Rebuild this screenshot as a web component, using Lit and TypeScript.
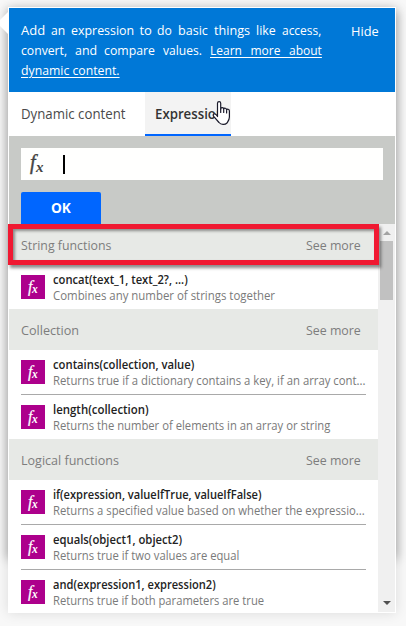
import { LitElement, html, css, svg } from "lit";
import { customElement, property } from "lit/decorators.js";

/** Text run condensed or widened so that it occupies a given width. */
@customElement("fit-text")
class FitText extends LitElement {
  @property({ type: String }) text = "";
  @property({ type: Number }) width = 0;

  static styles = css`
    :host { display: block; white-space: pre; }
    .run { display: inline-block; transform-origin: 0 50%; text-decoration: inherit; }
  `;

  updated() {
    const run = this.renderRoot.querySelector(".run") as HTMLElement;
    const natural = run.offsetWidth;
    if (this.width && natural) {
      this.style.width = `${this.width}px`;
      run.style.transform = `scaleX(${this.width / natural})`;
    }
  }

  render() {
    return html`<span class="run">${this.text}</span>`;
  }
}

type Fn = { name: string; nameW: number; desc: string; descW: number };
type Group = { title: string; width: number; items: Fn[] };

const GROUPS: Group[] = [
  {
    title: "String functions", width: 90.5,
    items: [{ name: "concat(text_1, text_2?, ...)", nameW: 134.5, desc: "Combines any number of strings together", descW: 222 }],
  },
  {
    title: "Collection", width: 58,
    items: [
      { name: "contains(collection, value)", nameW: 141.5, desc: "Returns true if a dictionary contains a key, if an array cont...", descW: 312.5 },
      { name: "length(collection)", nameW: 96, desc: "Returns the number of elements in an array or string", descW: 277.5 },
    ],
  },
  {
    title: "Logical functions", width: 97.5,
    items: [
      { name: "if(expression, valueIfTrue, valueIfFalse)", nameW: 208.5, desc: "Returns a specified value based on whether the expressio...", descW: 311.5 },
      { name: "equals(object1, object2)", nameW: 129, desc: "Returns true if two values are equal", descW: 186.5 },
      { name: "and(expression1, expression2)", nameW: 162.5, desc: "Returns true if both parameters are true", descW: 211 },
    ],
  },
];

@customElement("app-root")
class AppRoot extends LitElement {
  static styles = css`
    :host {
      display: block; position: relative; box-sizing: border-box;
      width: 406px; height: 626px; overflow: hidden; padding: 7px 0 0 8px;
      background: #f8f8f8; font-family: "Open Sans", "Noto Sans", sans-serif;
    }
    .backdrop {
      position: absolute; left: 8px; top: 12px; width: 388px; height: 546px;
      box-shadow: 0 0 10px 1px rgba(0, 0, 0, 0.3);
    }
    .pointer {
      position: absolute; left: 0; top: 11px; width: 9px; height: 24px;
      background: #fff; clip-path: polygon(100% 0, 100% 100%, 0 62%, 0 38%);
    }
    .panel {
      position: relative; box-sizing: border-box; width: 388px; height: 606px;
      border: 1px solid #fff; background: #fff; box-shadow: 0 0 12px rgba(0, 0, 0, 0.12);
      display: flex; flex-direction: column;
    }
    .intro {
      height: 84px; flex: none; box-sizing: border-box; padding: 12px 17px 0 12px;
      display: flex; justify-content: space-between; background: #0078d7; color: #fff;
      font-size: 13px; line-height: 20px;
    }
    .line { display: flex; justify-content: space-between; width: 300px; height: 20px; }
    .link { text-decoration: underline; text-underline-offset: 2px; text-decoration-thickness: 1px; }
    .wide { word-spacing: 6px; }
    .hide { padding-top: 1px; }
    .tabs { display: flex; height: 44px; flex: none; font-size: 14px; line-height: 44px; color: #4a4a4a; }
    .tab { box-sizing: border-box; width: 136px; padding-left: 12px; }
    .tab.active {
      width: 86px; padding-left: 10px; background: #f3f3f3; border-bottom: 2px solid #0066ff;
      font-weight: 600; color: #333;
    }
    .editor { height: 88px; flex: none; box-sizing: border-box; padding: 12px 12px 0; background: #c8cac7; }
    .input { display: flex; align-items: center; height: 32px; background: #fffffe; }
    .input svg { margin-left: 5px; }
    .caret { width: 2px; height: 19px; background: #000; margin-left: 15px; }
    .ok {
      margin-top: 12px; width: 80px; height: 32px; border-radius: 2px 2px 0 0; background: #0066ff;
      color: #fff; font-size: 14px; font-weight: 700; line-height: 32px;
      display: flex; justify-content: center;
    }
    .body { display: flex; flex: 1; min-height: 0; }
    .list { width: 369px; overflow: hidden; }
    .group {
      height: 41px; box-sizing: border-box; padding: 0 17px 0 12px; background: #e7e9e6; color: #7d7d7d;
      display: flex; justify-content: space-between; font-size: 13.5px; line-height: 42px;
    }
    .row { margin: 0 12px; height: 44px; display: flex; align-items: center; gap: 8px; }
    .row + .row { border-top: 1px solid #a9a9a9; }
    .tile { width: 24px; height: 24px; flex: none; background: #ad008c; }
    .tile svg { display: block; }
    .copy { height: 32px; }
    .name { font-size: 12.5px; font-weight: 600; line-height: 17px; color: #222; }
    .desc { font-size: 12.5px; line-height: 15px; color: #7a7a7a; }
    .scroll {
      width: 17px; height: 388px; background: #f0f0f0; display: flex; flex-direction: column;
      align-items: center;
    }
    .up { margin-top: 7px; border: 4px solid transparent; border-top: 0; border-bottom-color: #a3a3a3; }
    .thumb { width: 13px; height: 59px; margin-top: 6px; background: #c1c1c1; }
    .down { margin-top: auto; margin-bottom: 7px; border: 4px solid transparent; border-bottom: 0; border-top-color: #505050; }
    .highlight {
      position: absolute; left: 8px; top: 224px; box-sizing: border-box; width: 371px; height: 41px;
      border: 5px solid #f01932;
      box-shadow: 2px 3px 3px rgba(0, 0, 0, 0.45), inset 2px 2px 3px rgba(0, 0, 0, 0.4);
    }
    .cursor { position: absolute; left: 212px; top: 100px; }
    .glyph { font-family: "Liberation Serif", serif; font-style: italic; }
  `;

  tile() {
    return svg`<svg width="24" height="24" viewBox="0 0 24 24" fill="#fff">
      <text class="glyph" x="7" y="16.5" font-size="16" stroke="#fff" stroke-width="0.2">f</text>
      <text class="glyph" x="11" y="18" font-size="11.5" font-weight="bold">x</text>
    </svg>`;
  }

  render() {
    return html`
      <div class="backdrop"></div>
      <div class="panel">
        <div class="intro">
          <div>
            <div class="line">
              ${[["Add", 24], ["an", 14], ["expression", 63], ["to", 12], ["do", 15], ["basic", 30], ["things", 36], ["like", 20], ["access,", 39.5]].map(
                ([t, w]) => html`<fit-text .text=${t} .width=${w}></fit-text>`)}
            </div>
            <div class="line">
              <fit-text .text=${"convert,"} .width=${46}></fit-text>
              <fit-text .text=${"and"} .width=${22}></fit-text>
              <fit-text .text=${"compare"} .width=${51}></fit-text>
              <fit-text .text=${"values."} .width=${39}></fit-text>
              <fit-text class="link wide" .text=${"Learn more about"} .width=${111.5}></fit-text>
            </div>
            <fit-text class="link" .text=${"dynamic content."} .width=${99}></fit-text>
          </div>
          <fit-text class="hide" .text=${"Hide"} .width=${27.5}></fit-text>
        </div>
        <div class="tabs">
          <div class="tab"><fit-text .text=${"Dynamic content"} .width=${105}></fit-text></div>
          <div class="tab active"><fit-text .text=${"Expression"} .width=${69}></fit-text></div>
        </div>
        <div class="editor">
          <div class="input">
            <svg width="22" height="26" viewBox="0 0 22 26" fill="#444">
              <text class="glyph" x="4" y="18" font-size="20" stroke="#444" stroke-width="0.4">f</text>
              <text class="glyph" x="10" y="21" font-size="15" font-weight="bold">x</text>
            </svg>
            <div class="caret"></div>
          </div>
          <div class="ok"><fit-text .text=${"OK"} .width=${19.5}></fit-text></div>
        </div>
        <div class="body">
          <div class="list">
            ${GROUPS.map((g) => html`
              <div class="group">
                <fit-text .text=${g.title} .width=${g.width}></fit-text>
                <fit-text .text=${"See more"} .width=${55}></fit-text>
              </div>
              ${g.items.map((f) => html`
                <div class="row">
                  <div class="tile">${this.tile()}</div>
                  <div class="copy">
                    <fit-text class="name" .text=${f.name} .width=${f.nameW}></fit-text>
                    <fit-text class="desc" .text=${f.desc} .width=${f.descW}></fit-text>
                  </div>
                </div>`)}
            `)}
          </div>
          <div class="scroll">
            <div class="up"></div>
            <div class="thumb"></div>
            <div class="down"></div>
          </div>
        </div>
      </div>
      <div class="pointer"></div>
      <div class="highlight"></div>
      <svg class="cursor" width="20" height="26" viewBox="0 0 20 26" fill="#fff" stroke="#1b1b2b" stroke-width="1.2" stroke-linejoin="round" stroke-linecap="round">
        <path d="M5.5 16.5V3.2C5.5 1 8.7 1 8.7 3.2V9C9 7 11.7 7.3 11.7 9.2C12.2 7.5 14.6 8 14.6 10C15.2 8.7 17.4 9 17.4 11V17C17.4 20 16 21.5 15 23C13 25 9 25 7 22.5L1.7 16.4C.2 14.3 2.5 13 4 14.5Z"/>
        <path d="M8.7 9V12.5M11.7 9.5V12.5M14.6 10.5V13" fill="none"/>
      </svg>
    `;
  }
}
